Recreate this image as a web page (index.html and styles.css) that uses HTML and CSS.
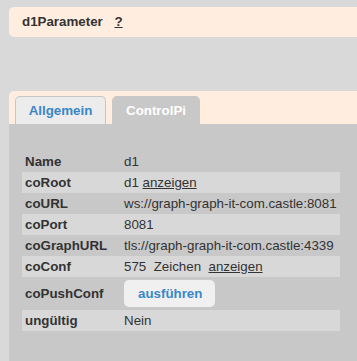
FILE: index.html
```html
<!DOCTYPE html>
<html lang="de">
<head>
    <meta charset="UTF-8">
    <meta name="viewport" content="width=device-width, initial-scale=1.0">
    <title>d1Parameter</title>
    <link rel="stylesheet" href="styles.css">
</head>
<body>
    <div class="header">
        <span class="title">d1Parameter</span>
        <a class="help" href="#">?</a>
    </div>
    <div class="panel">
        <div class="tabs">
            <div class="tab">Allgemein</div>
            <div class="tab active">ControlPi</div>
        </div>
        <div class="content">
            <table class="params">
                <tr>
                    <th>Name</th>
                    <td>d1</td>
                </tr>
                <tr class="odd">
                    <th>coRoot</th>
                    <td>d1 <a href="#">anzeigen</a></td>
                </tr>
                <tr>
                    <th>coURL</th>
                    <td>ws://graph-graph-it-com.castle:8081</td>
                </tr>
                <tr class="odd">
                    <th>coPort</th>
                    <td>8081</td>
                </tr>
                <tr>
                    <th>coGraphURL</th>
                    <td>tls://graph-graph-it-com.castle:4339</td>
                </tr>
                <tr class="odd">
                    <th>coConf</th>
                    <td>575&nbsp; Zeichen&nbsp; <a href="#">anzeigen</a></td>
                </tr>
                <tr class="btn-row">
                    <th>coPushConf</th>
                    <td><button class="button">ausführen</button></td>
                </tr>
                <tr class="odd">
                    <th>ungültig</th>
                    <td>Nein</td>
                </tr>
            </table>
        </div>
    </div>
</body>
</html>
```

FILE: styles.css
```css
body {
    display: flex;
    flex-direction: column;
    height: 100vh;
    margin: 0;
    background-color: #d9d9d9;
    font-family: "Liberation Sans", Arial, sans-serif;
    font-size: 13.33px;
    color: #333;
    overflow: hidden;
}
.header {
    margin: 7px 0 0 9px;
    height: 30px;
    line-height: 30px;
    padding-left: 13px;
    background-color: #ffeedf;
    border-radius: 5px 0 0 5px;
}
.title {
    font-weight: bold;
}
.help {
    margin-left: 8px;
    font-weight: bold;
    color: #333;
    text-decoration: underline;
}
.panel {
    display: flex;
    flex-direction: column;
    flex: 1;
    margin: 54px 0 0 9px;
    background-color: #ffeedf;
    border-radius: 5px 0 0 0;
}
.tabs {
    display: flex;
    gap: 6px;
    padding: 5px 0 0 6px;
}
.tab {
    box-sizing: border-box;
    width: 91px;
    height: 28px;
    line-height: 27px;
    text-align: center;
    font-weight: bold;
    color: #3a87c8;
    background-color: #ececec;
    border: 1px solid #c6c6c6;
    border-bottom: none;
    border-radius: 5px 5px 0 0;
}
.tab.active {
    width: 88px;
    color: #fff;
    background-color: #c8c8c8;
    border-color: #c8c8c8;
}
.content {
    flex: 1;
    background-color: #c8c8c8;
    padding: 27px 13px 0;
}
.params {
    width: 318px;
    border-collapse: collapse;
}
.params th,
.params td {
    height: 21px;
    padding: 0 3px;
    text-align: left;
    white-space: nowrap;
}
.params th {
    width: 96px;
}
.params td {
    padding-left: 0;
}
.params tr.odd {
    background-color: #d8d8d8;
}
.params tr.btn-row th,
.params tr.btn-row td {
    height: 33px;
}
.params a {
    color: #333;
    text-decoration: underline;
}
.button {
    display: inline-block;
    height: 27px;
    padding: 0 13px 0 14px;
    font-family: inherit;
    font-size: 13.33px;
    font-weight: bold;
    color: #3a87c8;
    background-color: #f0f0f0;
    border: none;
    border-radius: 5px;
    cursor: pointer;
}
```
